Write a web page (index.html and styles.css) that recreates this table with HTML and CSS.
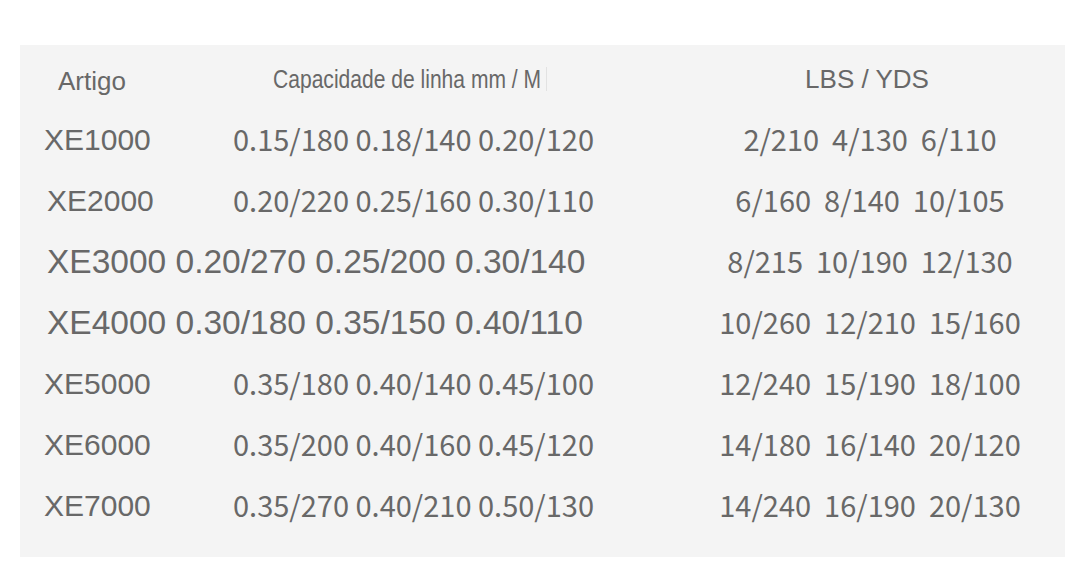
FILE: index.html
```html
<!DOCTYPE html>
<html lang="pt">
<head>
<meta charset="utf-8">
<title>Capacidade de linha</title>
<link rel="stylesheet" href="styles.css">
</head>
<body>
<div class="panel">
  <div class="row head">
    <div class="c1"><span class="h-art">Artigo</span></div>
    <div class="c2 hcell"><span class="h-cap">Capacidade de linha mm / M</span><span class="caret"></span></div>
    <div class="c3"><span class="h-lbs">LBS / YDS</span></div>
  </div>
  <div class="row">
    <div class="c1 lbl">XE1000</div>
    <div class="c2 num">0.15/180 0.18/140 0.20/120</div>
    <div class="c3 num">2/210  4/130  6/110</div>
  </div>
  <div class="row">
    <div class="c1 lbl l2">XE2000</div>
    <div class="c2 num">0.20/220 0.25/160 0.30/110</div>
    <div class="c3 num">6/160  8/140  10/105</div>
  </div>
  <div class="row">
    <div class="c12 big">XE3000 0.20/270 0.25/200 0.30/140</div>
    <div class="c3 num">8/215  10/190  12/130</div>
  </div>
  <div class="row">
    <div class="c12 big">XE4000 0.30/180 0.35/150 0.40/110</div>
    <div class="c3 num">10/260  12/210  15/160</div>
  </div>
  <div class="row">
    <div class="c1 lbl">XE5000</div>
    <div class="c2 num">0.35/180 0.40/140 0.45/100</div>
    <div class="c3 num">12/240  15/190  18/100</div>
  </div>
  <div class="row">
    <div class="c1 lbl">XE6000</div>
    <div class="c2 num">0.35/200 0.40/160 0.45/120</div>
    <div class="c3 num">14/180  16/140  20/120</div>
  </div>
  <div class="row">
    <div class="c1 lbl">XE7000</div>
    <div class="c2 num">0.35/270 0.40/210 0.50/130</div>
    <div class="c3 num">14/240  16/190  20/130</div>
  </div>
</div>
</body>
</html>
```
FILE: styles.css
```css
html, body {
  margin: 0;
  padding: 0;
  background: #ffffff;
}

body {
  width: 1080px;
  height: 587px;
  overflow: hidden;
  color: #686868;
  font-family: "Liberation Sans", Arial, sans-serif;
}

.panel {
  margin: 45px 0 0 20px;
  width: 1045px;
  height: 512px;
  box-sizing: border-box;
  padding: 4px 25px 0 24px;
  background: #f4f4f4;
}

.row {
  display: grid;
  grid-template-columns: 189px 467px 340px;
  height: 61px;
  align-items: center;
  white-space: pre;
}

.row.head {
  height: 60px;
}

.c1 {
  grid-column: 1;
}

.c2 {
  grid-column: 2;
}

.c12 {
  grid-column: 1 / span 2;
  padding-left: 3px;
}

.c3 {
  grid-column: 3;
  text-align: center;
}

.hcell {
  display: flex;
  align-items: center;
}

.h-art {
  display: inline-block;
  padding-left: 14px;
  padding-top: 4px;
  font-size: 26px;
}

.h-cap {
  display: inline-block;
  margin-left: 40px;
  font-size: 26px;
  transform: scaleX(0.81);
  transform-origin: left center;
  width: 268px;
}

.caret {
  display: inline-block;
  width: 0;
  height: 24px;
  margin-left: 5px;
  border-left: 1px solid #e2e2e2;
}

.h-lbs {
  display: inline-block;
  margin-left: -6px;
  font-size: 26px;
}

.lbl {
  font-size: 30px;
}

.lbl.l2 {
  padding-left: 3px;
}

.big {
  font-size: 33.5px;
}

.num {
  font-family: "Noto Sans CJK SC", "Noto Sans", sans-serif;
  font-size: 29px;
  padding-bottom: 4px;
}
```
